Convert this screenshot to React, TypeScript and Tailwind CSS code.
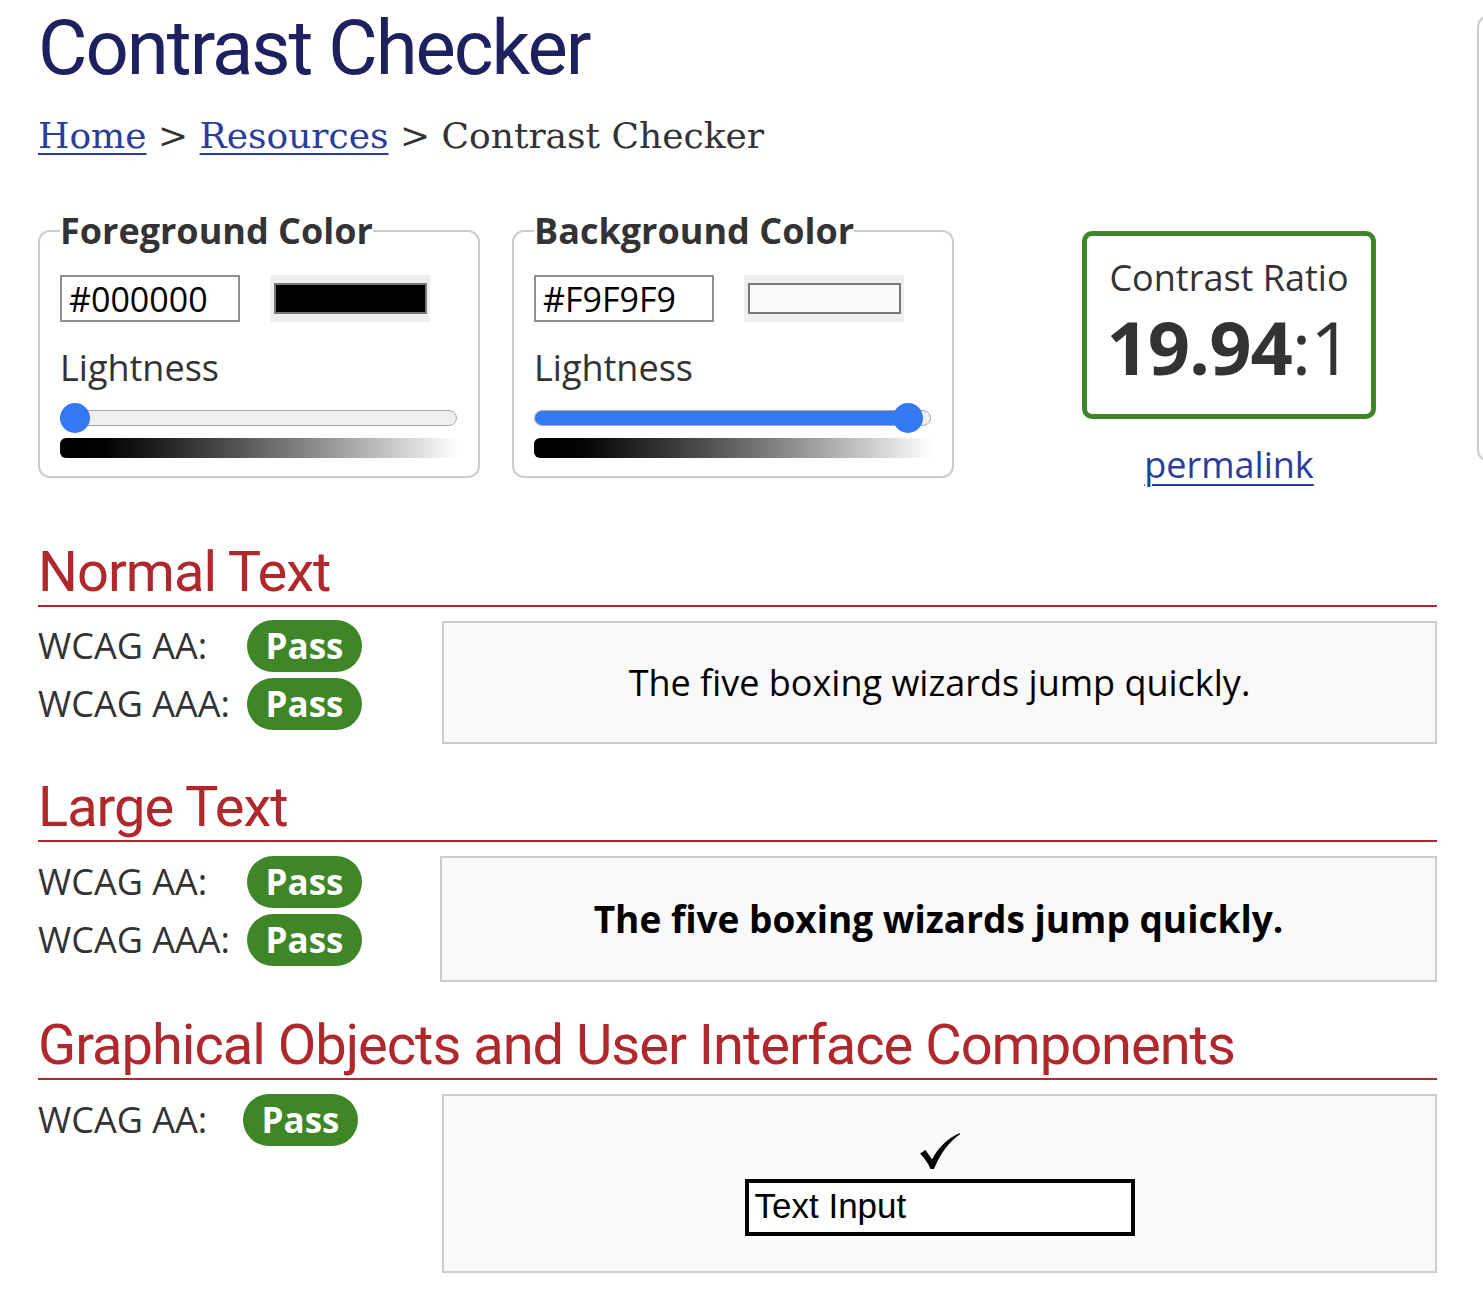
import React from "react";

const OPEN = "font-['Open_Sans',sans-serif]";
const ROBOTO = "font-['Roboto',sans-serif]";

function Slider({ centre }: { centre: number }) {
  // centre: x position (px) of the thumb centre along the track
  const thumb = 30;
  return (
    <div className="relative mt-[15px] flex h-[30px] w-[397px] items-center">
      <div className="relative h-[16px] w-full overflow-hidden rounded-full border border-[#a9a9a9] bg-[#efefef]">
        <div className="h-full bg-[#3578f3]" style={{ width: centre > 15 ? `${centre}px` : "0px" }} />
      </div>
      <div
        className="absolute top-0 h-[30px] w-[30px] rounded-full bg-[#3578f3]"
        style={{ left: `${centre - thumb / 2}px` }}
      />
    </div>
  );
}

function ColorFieldset({
  legend,
  hex,
  swatch,
  centre,
}: {
  legend: string;
  hex: string;
  swatch: string;
  centre: number;
}) {
  return (
    <fieldset className="w-[442px] min-w-0 shrink-0 rounded-[12px] border-2 border-[#cccccc] px-[20px] pb-[18px] pt-[24px]">
      <legend className={`${OPEN} text-[36px] font-bold leading-[40px] text-[#333333]`}>{legend}</legend>
      <div className="flex items-start gap-[30px]">
        <div
          className={`${OPEN} flex h-[47px] w-[180px] items-center border-2 border-[#8f8f8f] pl-[7px] text-[34px] leading-[40px] text-black`}
        >
          {hex}
        </div>
        <div className="flex h-[47px] w-[160px] items-center justify-center bg-[#efefef]">
          <div className="h-[31px] w-[153px] border-2 border-[#777777]" style={{ background: swatch }} />
        </div>
      </div>
      <div className={`${OPEN} mt-[26px] text-[36px] leading-[40px] text-[#333333]`}>Lightness</div>
      <Slider centre={centre} />
      <div className="mt-[5px] h-[20px] w-full rounded-l-[6px] bg-linear-to-r from-black to-white" />
    </fieldset>
  );
}

function Pass() {
  return (
    <div
      className={`${OPEN} flex h-[52px] w-[115px] items-center justify-center rounded-full bg-[#3e8627] text-[35px] font-bold leading-[40px] text-white`}
    >
      Pass
    </div>
  );
}

function Row({ label, labelW }: { label: string; labelW: string }) {
  return (
    <div className="flex h-[52px] items-center">
      <div className={`${OPEN} ${labelW} text-[36px] leading-[40px] text-[#333333]`}>{label}</div>
      <Pass />
    </div>
  );
}

function Heading({ children }: { children: React.ReactNode }) {
  return (
    <h2
      className={`${ROBOTO} border-b-2 border-[#b0282c] pb-[5px] text-[56px] font-normal leading-[56px] tracking-[-1px] text-[#b0282c]`}
    >
      {children}
    </h2>
  );
}

function CheckMark() {
  return (
    <svg width="40" height="36" viewBox="0 0 40 36" aria-hidden="true">
      <path
        d="M0 20.5 L5.5 17 L12 26.5 C18 15 27 5.5 40 0 L40 1.2 C29 9 20.5 20 14 36 L10.5 36 C8 30 4 24.5 0 20.5 Z"
        fill="#000"
      />
    </svg>
  );
}

export default function App() {
  return (
    <div className="flex min-h-[1299px] w-full overflow-hidden bg-white">
      <main className="w-[1437px] shrink-0 pl-[38px]">
        <h1
          className={`${ROBOTO} mt-[10px] text-[76px] font-normal leading-[76px] tracking-[-2px] text-[#1e2060]`}
        >
          Contrast Checker
        </h1>
        <nav className="mt-[28px] font-['DejaVu_Serif',serif] text-[36px] leading-[44px] text-[#333333]">
          <a href="#" className="text-[#2b3d9a] underline decoration-2 underline-offset-[5px]">
            Home
          </a>
          <span> &gt; </span>
          <a href="#" className="text-[#2b3d9a] underline decoration-2 underline-offset-[5px]">
            Resources
          </a>
          <span> &gt; Contrast Checker</span>
        </nav>

        <div className="mt-[53px] flex items-start">
          <ColorFieldset legend="Foreground Color" hex="#000000" swatch="#000000" centre={15} />
          <div className="ml-[32px]">
            <ColorFieldset legend="Background Color" hex="#F9F9F9" swatch="#F9F9F9" centre={374} />
          </div>
          <div className="ml-[128px] mt-[20px] flex w-[294px] flex-col items-center">
            <div className="flex h-[188px] w-[294px] flex-col items-center rounded-[10px] border-[5px] border-[#3e8627] pt-[22px]">
              <div className={`${OPEN} text-[36px] leading-[40px] text-[#333333]`}>Contrast Ratio</div>
              <div className={`${OPEN} mt-[12px] text-[74px] leading-[74px] tracking-[-1px] text-[#333333]`}>
                <span className="font-bold">19.94</span>
                <span>:1</span>
              </div>
            </div>
            <a
              href="#"
              className={`${OPEN} mt-[26px] text-[36px] leading-[40px] text-[#2b3d9a] underline decoration-2 underline-offset-[6px]`}
            >
              permalink
            </a>
          </div>
        </div>

        <section className="mt-[59px]">
          <Heading>Normal Text</Heading>
          <div className="mt-[13px] flex items-start">
            <div className="flex w-[404px] shrink-0 flex-col gap-[6px]">
              <Row label="WCAG AA:" labelW="w-[209px]" />
              <Row label="WCAG AAA:" labelW="w-[209px]" />
            </div>
            <div
              className={`${OPEN} mt-px flex h-[123px] flex-1 items-center justify-center border-2 border-[#cccccc] bg-[#f9f9f9] text-[36px] leading-[40px] text-black`}
            >
              The five boxing wizards jump quickly.
            </div>
          </div>
        </section>

        <section className="mt-[35px]">
          <Heading>Large Text</Heading>
          <div className="mt-[14px] flex items-start">
            <div className="flex w-[402px] shrink-0 flex-col gap-[6px]">
              <Row label="WCAG AA:" labelW="w-[209px]" />
              <Row label="WCAG AAA:" labelW="w-[209px]" />
            </div>
            <div
              className={`${OPEN} flex h-[126px] flex-1 items-center justify-center border-2 border-[#cccccc] bg-[#f9f9f9] text-[37px] font-bold leading-[44px] text-black`}
            >
              The five boxing wizards jump quickly.
            </div>
          </div>
        </section>

        <section className="mt-[35px]">
          <Heading>Graphical Objects and User Interface Components</Heading>
          <div className="mt-[14px] flex items-start">
            <div className="flex w-[404px] shrink-0 flex-col">
              <Row label="WCAG AA:" labelW="w-[205px]" />
            </div>
            <div className="flex h-[179px] flex-1 flex-col items-center border-2 border-[#cccccc] bg-[#f9f9f9] pt-[37px]">
              <CheckMark />
              <div className="mt-[10px] flex h-[57px] w-[390px] items-center border-[4px] border-black bg-white pb-[3px] pl-[6px] font-['Liberation_Sans',Arial,sans-serif] text-[35px] leading-[40px] text-black">
                Text Input
              </div>
            </div>
          </div>
        </section>
      </main>
      <aside className="ml-[40px] mt-[15px] h-[447px] w-[80px] shrink-0 rounded-[12px] border-2 border-[#cccccc]" />
    </div>
  );
}
